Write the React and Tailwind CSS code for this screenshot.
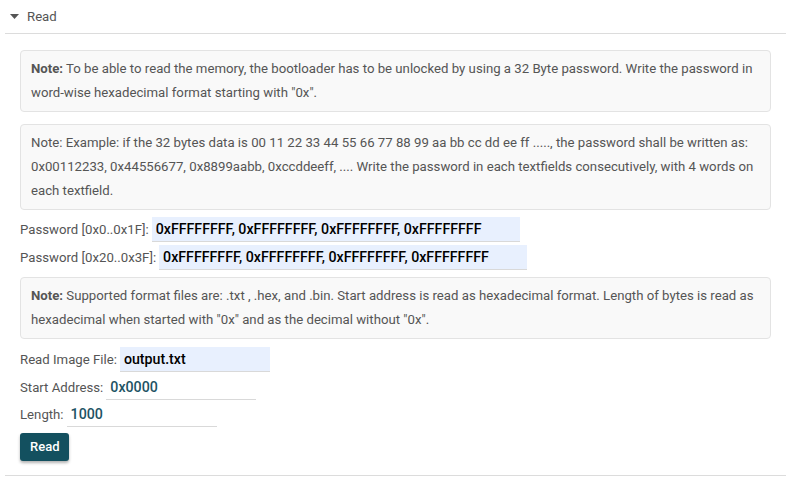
import React from "react";

const Note = ({ children }) => (
  <div className="bg-[#f9f9f9] border border-[#e3e3e3] rounded-[4px] px-[10px] py-[6px] leading-[24px]">
    {children}
  </div>
);

const Field = ({ label, value, width, filled, gap = "mt-[3px]" }) => (
  <div className={`flex items-center ${gap}`}>
    <span className="mr-[3px]">{label}</span>
    <input
      readOnly
      defaultValue={value}
      className={`h-[25px] px-[4px] border-0 border-b border-[#d9d9d9] outline-none text-[14.2px] font-medium ${
        filled ? "bg-[#e8f0fe] text-black" : "bg-transparent text-[#1d5364]"
      } ${width}`}
    />
  </div>
);

export default function App() {
  return (
    <div className="w-[786px] h-[481px] bg-white font-['Roboto',sans-serif] text-[13.2px] text-[#555]">
      <div className="ml-[5px] h-[34px] flex items-center border-b border-[#dcdcdc] pl-[5px]">
        <svg width="9" height="5" viewBox="0 0 9 5" className="mr-[8px]">
          <path d="M0 0 L9 0 L4.5 5 Z" fill="#555" />
        </svg>
        <span>Read</span>
      </div>

      <div className="pl-[20px] pr-[15px] pt-[16px]">
        <Note>
          <span className="font-bold">Note:</span>{" "}
          <span>To be able to read the memory, the bootloader has to be unlocked by using a 32 Byte password. Write the password in word-wise hexadecimal format starting with "0x".</span>
        </Note>
        <div className="mt-[12px]">
          <Note>
            Note: Example: if the 32 bytes data is 00 11 22 33 44 55 66 77 88 99 aa bb cc dd ee ff ....., the password shall be written as: 0x00112233, 0x44556677, 0x8899aabb, 0xccddeeff, .... Write the password in each textfields consecutively, with 4 words on each textfield.
          </Note>
        </div>

        <Field
          gap="mt-[7px]"
          label="Password [0x0..0x1F]:"
          value="0xFFFFFFFF, 0xFFFFFFFF, 0xFFFFFFFF, 0xFFFFFFFF"
          width="w-[368px]"
          filled
        />
        <Field
          label="Password [0x20..0x3F]:"
          value="0xFFFFFFFF, 0xFFFFFFFF, 0xFFFFFFFF, 0xFFFFFFFF"
          width="w-[368px]"
          filled
        />

        <div className="mt-[7px]">
          <Note>
            <span className="font-bold">Note:</span>{" "}
            <span>Supported format files are: .txt , .hex, and .bin. Start address is read as hexadecimal format. Length of bytes is read as hexadecimal when started with "0x" and as the decimal without "0x".</span>
          </Note>
        </div>

        <Field gap="mt-[8px]" label="Read Image File:" value="output.txt" width="w-[150px]" filled />
        <Field label="Start Address:" value="0x0000" width="w-[150px]" />
        <Field gap="mt-[2px]" label="Length:" value="1000" width="w-[150px]" />

        <button className="mt-[6px] h-[28px] px-[10px] bg-[#13505f] text-white text-[13px] font-medium rounded-[3px] shadow-[0_2px_3px_rgba(0,0,0,0.3)]">
          Read
        </button>
      </div>

      <div className="ml-[5px] mt-[14px] border-b border-[#dcdcdc]" />
    </div>
  );
}
